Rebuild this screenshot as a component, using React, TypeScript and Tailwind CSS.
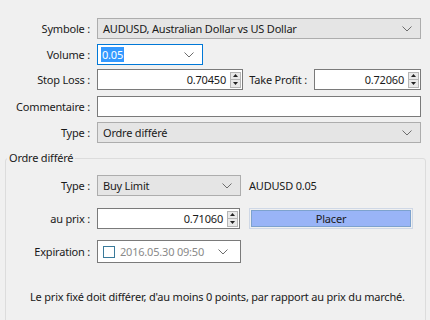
import React from "react";

const Chevron = () => (
  <svg width="10" height="6" viewBox="0 0 10 6" className="shrink-0">
    <polyline points="0.5,0.5 5,5 9.5,0.5" fill="none" stroke="#6d6d6d" strokeWidth="1" />
  </svg>
);

const Spinner = () => (
  <div className="flex h-[16px] w-[11px] shrink-0 flex-col border border-[#b5b5b5] bg-[#e9e9e9]">
    <div className="flex flex-1 items-center justify-center border-b border-[#b5b5b5]">
      <svg width="5" height="3" viewBox="0 0 5 3">
        <polygon points="0,3 2.5,0 5,3" fill="#222" />
      </svg>
    </div>
    <div className="flex flex-1 items-center justify-center">
      <svg width="5" height="3" viewBox="0 0 5 3">
        <polygon points="0,0 2.5,3 5,0" fill="#222" />
      </svg>
    </div>
  </div>
);

const Label = ({ children, w = "w-[97px]" }: { children: React.ReactNode; w?: string }) => (
  <div className={`${w} shrink-0 whitespace-nowrap pr-[7px] text-right`}>{children}</div>
);

const Combo = ({ value, className }: { value: string; className: string }) => (
  <div className={`flex h-[21px] items-center justify-between border border-[#adadad] bg-[#e5e5e5] pl-[5px] pr-[8px] ${className}`}>
    <span>{value}</span>
    <Chevron />
  </div>
);

const NumInput = ({ value, className }: { value: string; className: string }) => (
  <div className={`flex h-[21px] items-center justify-end gap-[4px] border border-[#7a7a7a] bg-white pr-[1px] ${className}`}>
    <span>{value}</span>
    <Spinner />
  </div>
);

export default function App() {
  return (
    <div
      className="h-[320px] w-[430px] overflow-hidden bg-[#f0f0f0] text-[11px] leading-none tracking-[-0.2px] text-[#1a1a1a]"
      style={{ fontFamily: "'Noto Sans', 'Open Sans', sans-serif" }}
    >
      <div className="flex flex-col pt-[18px]">
        {/* Symbole */}
        <div className="flex items-center">
          <Label>Symbole :</Label>
          <Combo value="AUDUSD, Australian Dollar vs US Dollar" className="w-[324px]" />
        </div>

        {/* Volume */}
        <div className="mt-[5px] flex items-center">
          <Label>Volume :</Label>
          <div className="flex h-[21px] w-[106px] items-center justify-between border border-[#0078d7] bg-white pl-[3px] pr-[8px]">
            <span className="bg-[#3399ff] px-[1px] py-[2px] text-white">0.05</span>
            <Chevron />
          </div>
        </div>

        {/* Stop Loss / Take Profit */}
        <div className="mt-[4px] flex items-center pr-[9px]">
          <Label>Stop Loss :</Label>
          <NumInput value="0.70450" className="w-[146px]" />
          <div className="flex-1 pr-[7px] text-right">Take Profit :</div>
          <NumInput value="0.72060" className="w-[107px]" />
        </div>

        {/* Commentaire */}
        <div className="mt-[6px] flex items-center">
          <Label>Commentaire :</Label>
          <div className="h-[21px] w-[324px] border border-[#7a7a7a] bg-white" />
        </div>

        {/* Type */}
        <div className="mt-[5px] flex items-center">
          <Label>Type :</Label>
          <Combo value="Ordre différé" className="w-[324px]" />
        </div>
      </div>

      {/* Ordre différé */}
      <fieldset className="ml-[5px] mr-[4px] mt-[8px] rounded-[3px] border border-[#dcdcdc] pb-[20px]">
        <legend className="ml-[1px] px-[2px] leading-[14px]">Ordre différé</legend>

        <div className="mt-[10px] flex items-center">
          <Label w="w-[91px]">Type :</Label>
          <Combo value="Buy Limit" className="w-[144px]" />
          <span className="ml-[8px]">AUDUSD 0.05</span>
        </div>

        <div className="mt-[12px] flex items-center">
          <Label w="w-[91px]">au prix :</Label>
          <NumInput value="0.71060" className="w-[143px]" />
          <div className="ml-[9px] border border-[#cfd8e6] p-[1px]">
            <button className="flex h-[17px] w-[160px] items-center justify-center border border-[#7da2ce] bg-[#99b4f7] text-[#1a1a1a]">
              Placer
            </button>
          </div>
        </div>

        <div className="mt-[11px] flex items-center">
          <Label w="w-[91px]">Expiration :</Label>
          <div className="flex h-[23px] w-[144px] items-center border border-[#7a7a7a] bg-white pl-[5px] pr-[12px]">
            <div className="h-[12px] w-[12px] shrink-0 border border-[#3a7a9a]" />
            <span className="ml-[5px] whitespace-nowrap text-[#8a8a8a]">2016.05.30 09:50</span>
            <div className="ml-auto">
              <Chevron />
            </div>
          </div>
        </div>

        <p className="mt-[28px] whitespace-nowrap pl-[24px]">
          Le prix fixé doit différer, d'au moins 0 points, par rapport au prix du marché.
        </p>
      </fieldset>
    </div>
  );
}
